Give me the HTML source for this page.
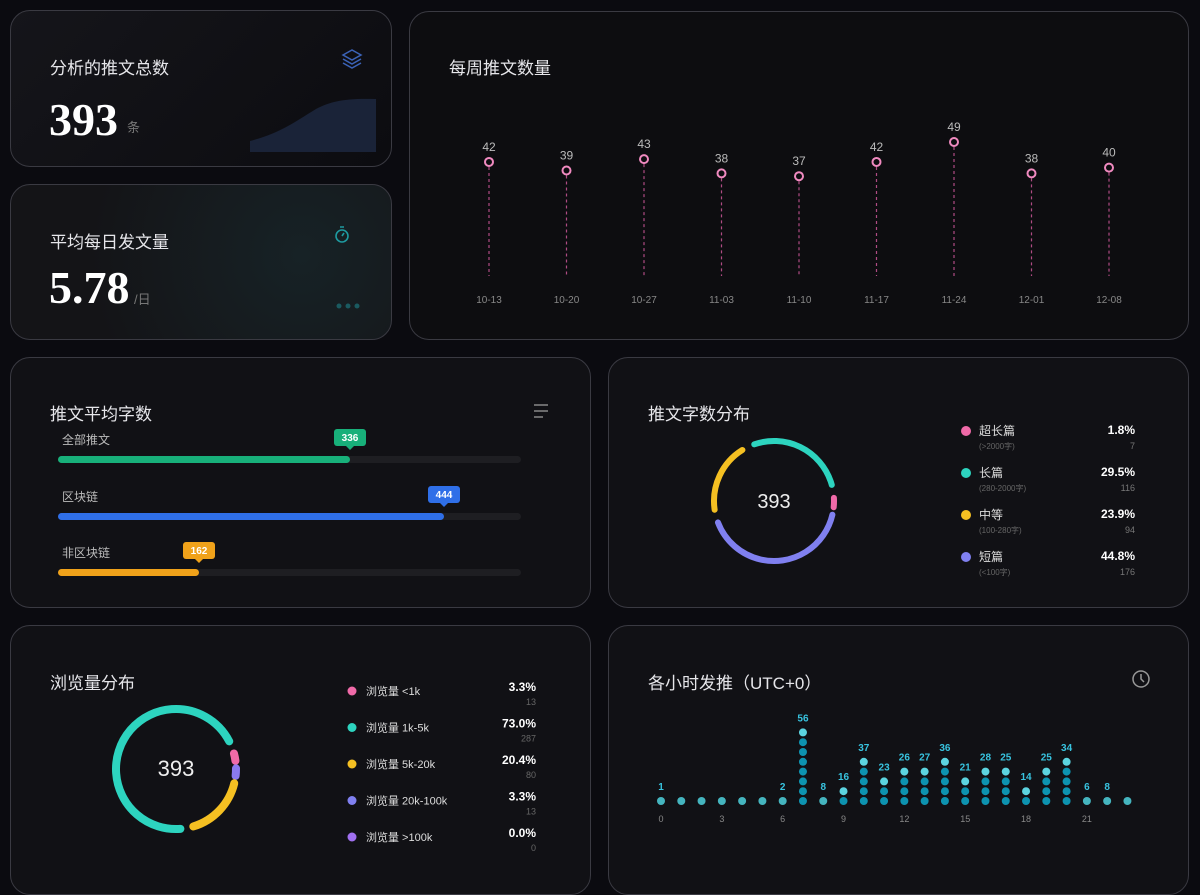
<!DOCTYPE html>
<html><head><meta charset="utf-8"><style>
*{margin:0;padding:0;box-sizing:border-box}
body{width:1200px;height:875px;overflow:hidden;background:#0b0b10;font-family:"Liberation Sans","Noto Sans CJK SC",sans-serif;color:#e8e8ec;position:relative}
.card{position:absolute;border:1.5px solid #3a3a42;border-radius:20px;background:#111115;overflow:hidden}
.t{position:absolute;font-size:17px;color:#e6e6ea}
.big{position:absolute;font-family:"Liberation Serif","Noto Serif CJK SC",serif;font-weight:bold;color:#fff}
svg{position:absolute;left:0;top:0}
</style></head><body>
<div class="card" style="left:10px;top:10px;width:382px;height:157px;background:linear-gradient(135deg,#15151a,#0c0c10)">
 <div class="t" style="left:39px;top:43px">分析的推文总数</div>
 <div class="big" style="left:38px;top:82px;font-size:46px">393</div>
 <div style="position:absolute;left:116px;top:106px;font-size:13px;color:#777">条</div>
 <svg width="382" height="157"><path d="M239 141 L239 130 C270 122 285 110 305 98 C320 90 335 87 365 88 L365 141Z" fill="#1a2338"/>
 <g fill="none" stroke="#3b63b8" stroke-width="1.5"><path d="M332 44l9-5 9 5-9 5z"/><path d="M332 48l9 5 9-5"/><path d="M332 52l9 5 9-5"/></g></svg>
</div>
<div class="card" style="left:10px;top:184px;width:382px;height:156px;background:radial-gradient(circle at 290px 70px,#172226,#141417 70%)">
 <div class="t" style="left:39px;top:43px">平均每日发文量</div>
 <div class="big" style="left:38px;top:76px;font-size:46px">5.78</div>
 <div style="position:absolute;left:123px;top:104px;font-size:13px;color:#777">/日</div>
 <svg width="382" height="156"><circle cx="331" cy="51" r="6" fill="none" stroke="#1e9aa0" stroke-width="1.6"/><path d="M329 42h4M331 51l2-3" stroke="#1e9aa0" stroke-width="1.6"/>
 <circle cx="328" cy="121" r="2.5" fill="#1a5a60"/><circle cx="337" cy="121" r="2.5" fill="#1a5a60"/><circle cx="346" cy="121" r="2.5" fill="#1a5a60"/></svg>
</div>
<div class="card" style="left:409px;top:11px;width:780px;height:329px;background:#0d0d10">
 <div class="t" style="left:39px;top:42px">每周推文数量</div>
 <svg width="780" height="329" id="wk"></svg>
</div>
<div class="card" style="left:10px;top:357px;width:581px;height:251px">
 <div class="t" style="left:39px;top:42px">推文平均字数</div>
 <svg width="581" height="251" id="avg"></svg>
</div>
<div class="card" style="left:608px;top:357px;width:581px;height:251px">
 <div class="t" style="left:39px;top:42px">推文字数分布</div>
 <svg width="581" height="251" id="d1"></svg>
</div>
<div class="card" style="left:10px;top:625px;width:581px;height:270px">
 <div class="t" style="left:39px;top:43px">浏览量分布</div>
 <svg width="581" height="270" id="d2"></svg>
</div>
<div class="card" style="left:608px;top:625px;width:581px;height:270px">
 <div class="t" style="left:39px;top:43px">各小时发推（UTC+0）</div>
 <svg width="581" height="270" id="hr"></svg>
</div>
<script>
const NS='http://www.w3.org/2000/svg';
function add(svg,tag,a,txt){const e=document.createElementNS(NS,tag);for(const k in a)e.setAttribute(k,a[k]);if(txt!=null)e.textContent=txt;svg.appendChild(e);return e;}
let s=document.getElementById('wk');
const wv=[42,39,43,38,37,42,49,38,40],wl=['10-13','10-20','10-27','11-03','11-10','11-17','11-24','12-01','12-08'];
wv.forEach((v,i)=>{const x=79+i*77.5;const y=143+(49-v)*2.85-13;
add(s,'line',{x1:x,y1:y+5,x2:x,y2:264,stroke:'#b04c84','stroke-width':1.2,'stroke-dasharray':'3 3'});
add(s,'circle',{cx:x,cy:y,r:4,fill:'#0d0d10',stroke:'#f08ac0','stroke-width':2});
add(s,'text',{x:x,y:y-11,'text-anchor':'middle','font-size':12,fill:'#bbb'},v);
add(s,'text',{x:x,y:291,'text-anchor':'middle','font-size':10,fill:'#888'},wl[i]);});
s=document.getElementById('avg');
add(s,'path',{d:'M523 47h14M523 53h14M523 59h9',stroke:'#888','stroke-width':1.5});
[['全部推文',339,'#18b07a',336,101],['区块链',433,'#2f6fe8',444,158],['非区块链',188,'#f0a21a',162,214]].forEach(r=>{
const y=r[4];add(s,'text',{x:51,y:y-15,'font-size':12,fill:'#bbb'},r[0]);
add(s,'rect',{x:47,y:y-3,width:463,height:7,rx:3.5,fill:'#1e1e22'});
add(s,'rect',{x:47,y:y-3,width:r[1]-47,height:7,rx:3.5,fill:r[2]});
add(s,'rect',{x:r[1]-16,y:y-30,width:32,height:17,rx:3,fill:r[2]});
add(s,'path',{d:`M${r[1]-4} ${y-13}l4 4 4-4z`,fill:r[2]});
add(s,'text',{x:r[1],y:y-18,'text-anchor':'middle','font-size':10,'font-weight':'bold',fill:'#fff'},r[3]);});
function donut(svg,cx,cy,r,w,segs,start){const C=2*Math.PI*r;let a=start;segs.forEach(sg=>{const gap=sg[2]||0.035;const len=Math.max(sg[0]*C-gap*C,3);
add(svg,'circle',{cx,cy,r,fill:'none',stroke:sg[1],'stroke-width':w,'stroke-linecap':'round','stroke-dasharray':`${len} ${C}`,transform:`rotate(${a} ${cx} ${cy})`});a+=sg[0]*360;});}
s=document.getElementById('d1');
donut(s,165,143,60,6,[[0.045,'#f06aa8',0.02],[0.44,'#8080f0'],[0.22,'#f5c022'],[0.295,'#2dd4bf']],-3);
add(s,'text',{x:165,y:150,'text-anchor':'middle','font-size':20,fill:'#eee'},'393');
[['超长篇','(>2000字)','1.8%',7,'#f06aa8'],['长篇','(280-2000字)','29.5%',116,'#2dd4bf'],['中等','(100-280字)','23.9%',94,'#f5c022'],['短篇','(<100字)','44.8%',176,'#8080f0']].forEach((l,i)=>{const y=73+i*42;
add(s,'circle',{cx:357,cy:y,r:5,fill:l[4]});add(s,'text',{x:370,y:y+4,'font-size':12,fill:'#ddd'},l[0]);
add(s,'text',{x:370,y:y+18,'font-size':8,fill:'#666'},l[1]);
add(s,'text',{x:526,y:y+3,'text-anchor':'end','font-size':12,'font-weight':'bold',fill:'#fff'},l[2]);
add(s,'text',{x:526,y:y+18,'text-anchor':'end','font-size':9,fill:'#777'},l[3]);});
s=document.getElementById('d2');
donut(s,165,143,60,8,[[0.04,'#f06aa8',0.02],[0.04,'#8a7af0',0.02],[0.2,'#f5c022'],[0.72,'#2dd4bf']],-15);
add(s,'text',{x:165,y:150,'text-anchor':'middle','font-size':22,fill:'#eee'},'393');
[['浏览量 <1k','3.3%',13,'#f06aa8'],['浏览量 1k-5k','73.0%',287,'#2dd4bf'],['浏览量 5k-20k','20.4%',80,'#f5c022'],['浏览量 20k-100k','3.3%',13,'#8080f0'],['浏览量 >100k','0.0%',0,'#a070f0']].forEach((l,i)=>{const y=65+i*36.5;
add(s,'circle',{cx:341,cy:y,r:4.5,fill:l[3]});add(s,'text',{x:355,y:y+4,'font-size':11,fill:'#ddd'},l[0]);
add(s,'text',{x:525,y:y,'text-anchor':'end','font-size':12,'font-weight':'bold',fill:'#fff'},l[1]);
add(s,'text',{x:525,y:y+14,'text-anchor':'end','font-size':9,fill:'#666'},l[2]);});
s=document.getElementById('hr');
add(s,'circle',{cx:532,cy:53,r:8,fill:'none',stroke:'#999','stroke-width':1.5});add(s,'path',{d:'M532 48v5l3 3',fill:'none',stroke:'#999','stroke-width':1.5});
const hv=[1,0,0,0,0,0,2,56,8,16,37,23,26,27,36,21,28,25,14,25,34,6,8,0];
hv.forEach((v,i)=>{const x=52+i*20.28;const n=Math.max(1,Math.round(v/7));
for(let k=0;k<n;k++){const top=k==n-1;add(s,'circle',{cx:x,cy:175-k*9.8,r:4,fill:n==1?'#45b5bf':(top?'#5cd4e0':'#0d93b0')});}
if(v)add(s,'text',{x:x,y:175-(n-1)*9.8-11,'text-anchor':'middle','font-size':10,'font-weight':'bold',fill:'#38c4e0'},v);
if(i%3==0)add(s,'text',{x:x,y:196,'text-anchor':'middle','font-size':9,fill:'#888'},i);});
</script>
</body></html>
